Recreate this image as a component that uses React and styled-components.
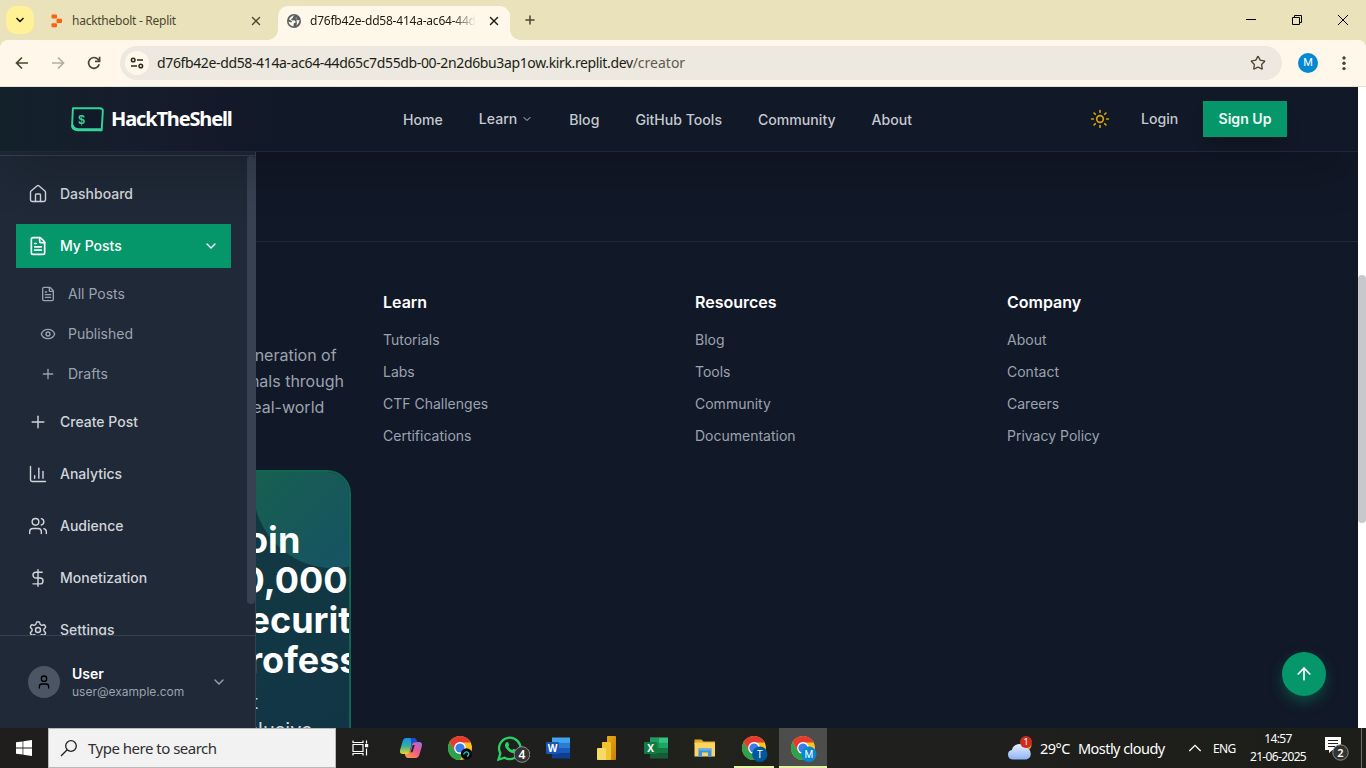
import React from 'react';
import styled, { createGlobalStyle, css } from 'styled-components';
import {
  House, FileText, Eye, Plus, ChartColumn, Users, DollarSign, Settings,
  ChevronDown, User, ArrowUp, Sun, X, Star,
} from 'lucide-react';

const ui = '"Noto Sans", "Open Sans", sans-serif';
const inter = 'Inter, "Liberation Sans", sans-serif';

const GlobalStyle = createGlobalStyle`
  * { box-sizing: border-box; }
  body { margin: 0; overflow: hidden; }
  svg { display: block; flex: none; }
`;

const Screen = styled.div`
  width: 1366px;
  height: 768px;
  display: flex;
  flex-direction: column;
  overflow: hidden;
  font-family: ${inter};
`;

/* ---------- browser frame ---------- */

const TabStrip = styled.div`
  height: 40px;
  flex: none;
  display: flex;
  align-items: center;
  background: #eae2bb;
  padding-left: 6px;
`;
const TabSearch = styled.div`
  width: 28px;
  height: 28px;
  border-radius: 10px;
  background: #fff196;
  display: grid;
  place-items: center;
  color: #201c00;
`;
const Tab = styled.div`
  display: flex;
  align-items: center;
  height: 34px;
  margin-top: 6px;
  font: 12px/16px ${ui};
  color: ${p => (p.$active ? '#1f1c0c' : '#4a4630')};
  padding: 0 9px 5px ${p => (p.$active ? 9 : 17)}px;
  width: ${p => p.$width}px;
  ${p => p.$active && css`
    background: #fff8ea;
    border-radius: 10px 10px 0 0;
    position: relative;
    &::before, &::after {
      content: '';
      position: absolute;
      bottom: 0;
      width: 10px;
      height: 10px;
    }
    &::before { left: -10px; background: radial-gradient(circle at 0 0, transparent 9.5px, #fff8ea 10px); }
    &::after { right: -10px; background: radial-gradient(circle at 100% 0, transparent 9.5px, #fff8ea 10px); }
  `}
`;
const TabTitle = styled.span`
  flex: 1;
  margin-left: 9px;
  letter-spacing: ${p => p.$track}px;
  white-space: nowrap;
  overflow: hidden;
  ${p => p.$fade && css`mask-image: linear-gradient(90deg, #000 86%, transparent 100%);`}
`;
const TabClose = styled(X).attrs({ size: 14, strokeWidth: 2.4 })`
  margin: 0 ${p => p.$after || 0}px 0 11px;
`;
const NewTab = styled.div`
  margin-left: 13px;
  color: #4a4630;
`;
const WindowControls = styled.div`
  margin-left: auto;
  display: flex;
  align-items: center;
  gap: 36px;
  padding-right: 18px;
`;

const ToolbarBack = styled.div`
  background: #eae2bb;
  flex: none;
`;
const Toolbar = styled.div`
  height: 47px;
  background: #fff8ea;
  border-radius: 8px 8px 0 0;
  border-bottom: 1px solid #e6e0d0;
  display: flex;
  align-items: center;
  padding: 0 20px 0 14px;
`;
const NavButton = styled.div`
  width: 16px;
  height: 16px;
  margin-right: 20px;
  color: ${p => (p.$dim ? '#b2ad9c' : '#4a4630')};
`;
const Omnibox = styled.div`
  flex: 1;
  margin: 0 16px 0 -2px;
  height: 34px;
  border-radius: 17px;
  background: #ede8e0;
  display: flex;
  align-items: center;
  padding: 0 16px 0 5px;
  font: 14px/20px ${ui};
  color: #201e14;
`;
const SiteInfo = styled.div`
  width: 24px;
  height: 24px;
  border-radius: 50%;
  background: #fff8ea;
  display: grid;
  place-items: center;
  margin-right: 8px;
`;
const Url = styled.span`
  flex: 1;
  white-space: nowrap;
  letter-spacing: -0.365px;
`;
const UrlPath = styled.span`
  color: #5f5b4e;
  letter-spacing: 0;
`;
const Profile = styled.div`
  width: 20px;
  height: 20px;
  border-radius: 50%;
  background: #0488d1;
  color: #fff;
  font: 11px/20px Roboto, sans-serif;
  text-align: center;
  margin-right: 24px;
`;

/* ---------- page ---------- */

const Viewport = styled.div`
  flex: 1;
  min-height: 0;
  display: flex;
  background: #fff;
`;
const Page = styled.div`
  width: 1358px;
  display: flex;
  flex-direction: column;
  overflow: hidden;
  background: #111827;
`;
const ScrollTrack = styled.div`
  width: 8px;
  padding-top: 188px;
`;
const ScrollThumb = styled.div`
  width: 8px;
  height: ${p => p.$height}px;
  border-radius: 4px;
  background: ${p => p.$color};
`;

const Header = styled.header`
  height: 65px;
  flex: none;
  display: flex;
  align-items: center;
  padding: 0 71px;
  border-bottom: 1px solid #1f2838;
  background: linear-gradient(90deg, #13212b 0, #141f2b 70px, #161d2c 120px, #141a29 200px, #111827 280px);
  box-shadow: 0 25px 50px -12px rgba(0, 0, 0, 0.25);
  z-index: 3;
`;
const Brand = styled.div`
  display: flex;
  align-items: center;
  gap: 7px;
  width: 332px;
  color: #fff;
  font: 700 20px/28px ${ui};
  letter-spacing: -1.15px;
`;
const Menu = styled.nav`
  display: flex;
  gap: 36px;
  flex: 1;
  padding-top: 2px;
`;
const MenuLink = styled.span`
  display: flex;
  align-items: center;
  gap: 4px;
  font-weight: 500;
  font-size: 14.1px;
  line-height: 20px;
  color: #c5c9d0;
  white-space: nowrap;
  ${p => p.$raised && css`
    padding-bottom: 2px;
    margin: -1px 0 0 0;
  `}
`;
const Login = styled.span`
  margin: 0 24px 0 31px;
  width: 38px;
  font-weight: 500;
  font-size: 14.1px;
  line-height: 20px;
  color: #c5c9d0;
`;
const SignUp = styled.div`
  height: 36px;
  width: 84px;
  background: #059669;
  color: #f1faf6;
  font-weight: 600;
  font-size: 14.1px;
  line-height: 36px;
  text-align: center;
  box-shadow: 0 10px 15px -3px rgba(0, 0, 0, 0.2);
`;

const Body = styled.div`
  flex: 1;
  min-height: 0;
  display: grid;
  grid-template: minmax(0, 1fr) / minmax(0, 1fr);
`;

/* The sidebar shares the grid cell with the page and covers its left part. */
const Sidebar = styled.aside`
  grid-area: 1 / 1;
  width: 256px;
  z-index: 2;
  display: flex;
  flex-direction: column;
  background: #1f2937;
  border-right: 1px solid #374151;
`;
const SidebarScroll = styled.div`
  flex: 1;
  min-height: 0;
  display: flex;
  overflow: hidden;
  margin-top: 3px;
  border-top: 1px solid #374151;
`;
const SidebarNav = styled.div`
  flex: 1;
  padding: 16px;
  display: flex;
  flex-direction: column;
  gap: 8px;
`;
const NavItem = styled.div`
  height: 44px;
  flex: none;
  display: flex;
  align-items: center;
  gap: 12px;
  padding: 0 12px;
  font-size: 14px;
  line-height: 20px;
  font-weight: 500;
  background: ${p => (p.$active ? '#059669' : 'transparent')};
  color: ${p => (p.$active ? '#fff' : '#d1d5db')};
`;
const NavLabel = styled.span`
  flex: 1;
`;
const SubNav = styled.div`
  display: flex;
  flex-direction: column;
  gap: 4px;
  padding-left: 12px;
`;
const SubItem = styled.div`
  height: 36px;
  display: flex;
  align-items: center;
  gap: 12px;
  padding: 0 12px;
  font-size: 14px;
  line-height: 20px;
  color: #9ca3af;
`;
const UserPanel = styled.div`
  height: 93px;
  flex: none;
  border-top: 1px solid #374151;
  display: flex;
  align-items: center;
  padding: 0 28px;
  color: #9ca3af;
`;
const Avatar = styled.div`
  width: 32px;
  height: 32px;
  border-radius: 50%;
  background: #4b5563;
  color: #000;
  display: grid;
  place-items: center;
  margin-right: 12px;
`;
const UserText = styled.div`
  flex: 1;
  font-size: 12px;
  line-height: 16px;
`;
const UserName = styled.div`
  color: #fff;
  font-size: 14px;
  font-weight: 600;
  line-height: 20px;
`;

const Main = styled.main`
  grid-area: 1 / 1;
  padding-top: 89px;
  overflow: hidden;
`;
const Footer = styled.footer`
  border-top: 1px solid #1f2937;
  padding: 48px 71px 0;
  display: grid;
  grid-template-columns: repeat(4, 280px);
  gap: 32px;
`;
const FooterColumn = styled.div`
  display: flex;
  flex-direction: column;
`;
const FooterTitle = styled.div`
  color: #fff;
  font-size: 16px;
  font-weight: 600;
  line-height: 24px;
  margin-bottom: 16px;
`;
const FooterLink = styled.div`
  color: #9ca3af;
  font-size: 14px;
  line-height: 20px;
  margin-bottom: 12px;
`;
const Mission = styled.p`
  margin: 52px 0 0;
  color: #9ca3af;
  font-size: 16px;
  line-height: 26px;
  white-space: nowrap;
`;
const JoinCard = styled.div`
  margin-top: 50px;
  width: 280px;
  height: 420px;
  border: 2px solid #0e6653;
  border-radius: 24px;
  background: linear-gradient(160deg, #113a40, #123348);
  overflow: hidden;
  position: relative;
  padding: 48px 0 0 152px;
`;
const Bubble = styled.div`
  position: absolute;
  top: -64px;
  right: -64px;
  width: 160px;
  height: 160px;
  border-radius: 50%;
  background: linear-gradient(135deg, #185f50 20%, #16565f 65%, #165268);
`;
const JoinTitle = styled.div`
  position: relative;
  color: #fff;
  font-weight: 700;
  font-size: 36px;
  line-height: 40px;
`;
const JoinText = styled.div`
  position: relative;
  width: 100px;
  margin-top: 8px;
  color: #d1d5db;
  font-size: 20px;
  line-height: 28px;
`;
const BackToTop = styled.div`
  grid-area: 1 / 1;
  place-self: end;
  margin: 0 32px 32px 0;
  width: 44px;
  height: 44px;
  border-radius: 50%;
  background: #059669;
  color: #fff;
  display: grid;
  place-items: center;
  box-shadow: 0 6px 14px rgba(5, 150, 105, 0.4);
  z-index: 1;
`;

/* ---------- taskbar ---------- */

const Taskbar = styled.div`
  height: 40px;
  flex: none;
  display: flex;
  background: linear-gradient(90deg, #1f1e1d 0, #1f1f1e 640px, #22231b 715px, #1f1f1d 840px, #1d1e1a 1366px);
  color: #fff;
  font-family: ${ui};
`;
const TaskCell = styled.div`
  width: 48px;
  height: 40px;
  margin-right: ${p => p.$gap ?? 1}px;
  padding-left: ${p => p.$shift || 0}px;
  display: grid;
  place-items: center;
  background: ${p => (p.$current ? '#4d4d4c' : 'transparent')};
  box-shadow: ${p => (p.$running ? 'inset 0 -2px #e2f5a4' : 'none')};
  ${p => p.$narrow && css`width: 40px; margin: 0 5px 0 4px;`}
`;
const SearchBox = styled.div`
  width: 288px;
  border: 1px solid #b9b9b9;
  background: #f2f2f2;
  color: #303030;
  display: flex;
  align-items: center;
  gap: 10px;
  padding-left: 11px;
  font-size: 15px;
  letter-spacing: -0.5px;
`;
const Tray = styled.div`
  margin-left: auto;
  display: flex;
  align-items: center;
`;
const TrayText = styled.span`
  font-size: ${p => p.$size}px;
  letter-spacing: ${p => p.$track}px;
  width: ${p => p.$width}px;
  margin-left: ${p => p.$before || 0}px;
  white-space: nowrap;
`;
const Clock = styled.div`
  width: 64px;
  text-align: center;
  font-size: 12px;
  line-height: 18px;
  letter-spacing: -0.65px;
  white-space: nowrap;
  margin: 0 15px 0 -3px;
`;
const ShowDesktop = styled.div`
  width: 5px;
  height: 40px;
  margin-left: 11px;
  border-left: 1px solid #6d6d6b;
`;

/* ---------- drawings ---------- */

const ReplitMark = () => (
  <svg width="12" height="14" viewBox="0 0 12 14" fill="#ff5f0f">
    <rect x="0.5" y="0.5" width="5.5" height="4" rx="1" />
    <rect x="5.5" y="4.7" width="5.5" height="4.3" rx="1" />
    <rect x="0.5" y="9.2" width="5.5" height="4" rx="1" />
  </svg>
);

const Globe = () => (
  <svg width="14" height="14" viewBox="0 0 14 14">
    <circle cx="7" cy="7" r="7" fill="#5a5d62" />
    <path d="M7.600 1.400Q5.400 2.300 5.700 4.200 3.600 4.600 4.600 6.300L7.800 6.600Q8.900 7.200 8.400 8.800L6.800 9.300 6.400 12.500Q2 11.600 1.500 7.600L4.200 8.600 5.200 7.300 2 5.400Q3.600 1.700 7.600 1.400ZM9.200 3.100 8.700 4.800 10.300 6.200 12.600 6Q12.300 9.600 9.400 11.800L9.900 9.200" fill="#fff8ea" />
  </svg>
);

const Arrow = ({ flip }) => (
  <svg width="16" height="16" viewBox="0 0 16 16" fill="none" stroke="currentColor" strokeWidth="1.7">
    <path d={flip ? 'M2 8h11M8 2.5 13.5 8 8 13.5' : 'M14 8H3M8 2.5 2.5 8 8 13.5'} />
  </svg>
);

const Reload = () => (
  <svg width="16" height="16" viewBox="0 0 16 16" fill="none" stroke="currentColor" strokeWidth="1.7">
    <path d="M13.2 9.2A5.4 5.4 0 1 1 12 4.3L13.4 6" />
    <path d="M13.6 1.8v4.6H9" />
  </svg>
);

const Tune = () => (
  <svg width="14" height="12" viewBox="0 0 14 12" fill="none" stroke="#2a281e" strokeWidth="1.5">
    <circle cx="3.2" cy="3" r="1.8" />
    <path d="M7 3h6M1 9h6" />
    <circle cx="10.8" cy="9" r="1.8" />
  </svg>
);

const ShellLogo = () => (
  <svg width="33" height="25" viewBox="0 0 33 25">
    <path d="M1.900 1.300h26.800q3.400 0 3.100 2.900L30.700 23.200H7.200Q.9 23.200 1.100 18.500Z" fill="#111a29" stroke="#34d399" strokeWidth="1.900" strokeLinejoin="round" />
    <path d="M1.500 18q.6 4.200 5.500 4.500h23.300" fill="none" stroke="#34d399" strokeWidth="2.600" />
    <text x="7" y="16.500" fontFamily="Liberation Mono, monospace" fontSize="12" fontWeight="700" fill="#34d399">$</text>
  </svg>
);

const Magnifier = () => (
  <svg width="18" height="18" viewBox="0 0 18 18" fill="none" stroke="#222" strokeWidth="1.300">
    <circle cx="11" cy="7" r="5.300" />
    <path d="M7.200 10.800 1 17" />
  </svg>
);

const TrayChevron = () => (
  <svg width="14" height="8" viewBox="0 0 14 8" fill="none" stroke="#fff" strokeWidth="1.300">
    <path d="M1.300 7 7 1.300 12.700 7" />
  </svg>
);

const Chrome = ({ children }) => (
  <svg width="28" height="28" viewBox="0 0 28 28">
    <circle cx="14" cy="14" r="12" fill="#fcc31e" />
    <path d="M14 14 8.8 17 3.6 8A12 12 0 0 0 14 26l5.2-9Z" fill="#2ba24c" />
    <path d="M14 8.500h10.700A12 12 0 0 0 3.600 8l5.200 9Z" fill="#e33b2e" />
    <circle cx="14" cy="14" r="5.900" fill="#fff" />
    <circle cx="14" cy="14" r="4.600" fill="#3b7ded" />
    {children}
  </svg>
);

const LetterBadge = ({ letter, fill }) => (
  <>
    <circle cx="19.800" cy="20.200" r="7.700" fill={fill} />
    <text x="19.800" y="23.800" textAnchor="middle" fontFamily="Roboto, sans-serif" fontSize="10" fill="#fff">{letter}</text>
  </>
);

const Copilot = () => (
  <svg width="24" height="24" viewBox="0 0 24 24">
    <defs>
      <linearGradient id="cpa" x1="0.300" y1="0" x2="0.300" y2="1">
        <stop offset="0" stopColor="#1a8ff0" /><stop offset=".5" stopColor="#30b09d" /><stop offset="1" stopColor="#f0d22a" />
      </linearGradient>
      <linearGradient id="cpb" x1="1" y1="0" x2="0.200" y2="1">
        <stop offset="0" stopColor="#9a6cf5" /><stop offset=".5" stopColor="#ee5a86" /><stop offset="1" stopColor="#fb9a45" />
      </linearGradient>
    </defs>
    <path d="M17.200 22H9q-2 0-2.700-2.200L5.500 17h3q2 0 2.600-2l2.200-7.400Q13.900 6 16 6h4q4 0 2.800 4.500L20.300 19q-.9 3-3.100 3Z" fill="url(#cpb)" />
    <path d="M6.800 2H15L12.300 9.500 10.700 15.400Q10.100 18 8 18H4Q0 18 1.200 13.500L3.700 5Q4.600 2 6.800 2Z" fill="url(#cpa)" />
    <path d="M11.500 2H15q2 0 2.700 2.200L18.300 6.200H16q-2.200 0-2.700 1.600L12.600 10Z" fill="#1c50c8" />
    <path d="M13.700 9 11.600 16.200h2L15.700 9Z" fill="#20243a" />
  </svg>
);

const WhatsApp = () => (
  <svg width="34" height="30" viewBox="0 0 34 30">
    <path d="M2.500 26.500 4.300 20.300A10.700 10.700 0 1 1 8.600 24.700Z" fill="none" stroke="#27d163" strokeWidth="2.300" />
    <path d="M9.500 10.500q1.300-2.200 2.600-1l1.200 2.600-1 1.500q1.200 2.400 3.800 3.500l1.500-1.400 2.700 1.400q.4 2-1.900 2.900-2.200.7-5.400-1.600-3.900-3-4.100-6.300Z" fill="#27d163" />
    <circle cx="26" cy="21.500" r="7.800" fill="#333" stroke="#8d8d8d" />
    <text x="26" y="26" textAnchor="middle" fontFamily="Noto Sans, sans-serif" fontSize="12" fontWeight="600" fill="#fff">4</text>
  </svg>
);

const OfficeIcon = ({ letter, colors, tile }) => (
  <svg width="24" height="24" viewBox="0 0 24 24">
    <rect x="6" y="1.500" width="18" height="5.500" fill={colors[0]} />
    <rect x="6" y="6.800" width="18" height="5.400" fill={colors[1]} />
    <rect x="6" y="12" width="18" height="5.400" fill={colors[2]} />
    <rect x="6" y="17.200" width="18" height="5.300" fill={colors[3]} />
    {letter === 'X' && <path d="M6 1.500h9v16H6z" fill="#107c41" opacity=".55" />}
    <rect x="0" y="6" width="13" height="12" rx="1" fill={tile} />
    <text x="6.500" y="15.600" textAnchor="middle" fontFamily="Open Sans, sans-serif" fontSize="10" fontWeight="700" fill="#fff">{letter}</text>
  </svg>
);

const PowerBi = () => (
  <svg width="24" height="24" viewBox="0 0 24 24">
    <defs>
      <linearGradient id="pb" x1="0" y1="0" x2="1" y2="1">
        <stop offset="0" stopColor="#e8ad10" /><stop offset="1" stopColor="#c87e12" />
      </linearGradient>
    </defs>
    <rect x="12" y="0" width="9" height="24" rx=".8" fill="url(#pb)" />
    <rect x="7" y="6" width="9" height="18" rx=".8" fill="#f0c22c" />
    <rect x="2" y="12" width="9" height="12" rx=".8" fill="#f7da66" />
  </svg>
);

const Explorer = () => (
  <svg width="24" height="24" viewBox="0 0 24 24">
    <path d="M1.500 3.500h7l2 2h11.500v3H1.500z" fill="#e5a823" />
    <path d="M1.500 6.500h20.500v14H1.500z" fill="#fcd462" />
    <path d="M5.500 21v-8.500h13V21h-3.500v-4.500H9V21z" fill="#3f93d8" />
    <path d="M5.500 12.500h13v2h-13z" fill="#62b3ec" />
  </svg>
);

const TaskView = () => (
  <svg width="18" height="18" viewBox="0 0 18 18" fill="none" stroke="#fff" strokeWidth="1.200">
    <path d="M2 5.500h10v7H2zM2 1.500v2h10v-2M2 16.500v-2h10v2" />
    <path d="M15.500 1.500v3M15.500 9.500v7" />
    <rect x="14.600" y="5.600" width="2" height="2" fill="#fff" />
  </svg>
);

const WindowsLogo = () => (
  <svg width="16" height="16" viewBox="0 0 16 16" fill="#fff">
    <path d="M0 2.300 6.600 1.400V7.600H0zM7.300 1.300 16 0v7.600H7.300zM0 8.400h6.600v6.200L0 13.700zM7.300 8.400H16V16l-8.700-1.300z" />
  </svg>
);

const Weather = () => (
  <svg width="27" height="26" viewBox="0 0 27 26">
    <defs>
      <linearGradient id="cl" x1="0" y1="0" x2="0" y2="1">
        <stop offset="0" stopColor="#e6efff" /><stop offset="1" stopColor="#8db4f5" />
      </linearGradient>
    </defs>
    <circle cx="19" cy="10" r="5.500" fill="#f39a1d" />
    <path d="M5.500 24.500a4.800 4.800 0 0 1-.6-9.500 7.200 7.200 0 0 1 13.400-2.200A6 6 0 0 1 19.500 24.500Z" fill="url(#cl)" />
    <circle cx="19" cy="7" r="6" fill="#cf2b20" />
    <text x="19" y="10.300" textAnchor="middle" fontFamily="Noto Sans, sans-serif" fontSize="9" fill="#fff">1</text>
  </svg>
);

const Notifications = () => (
  <svg width="25" height="26" viewBox="0 0 25 26">
    <path d="M0 2h16v13H7.500L4 18v-3H0z" fill="#fff" />
    <path d="M3 5.500h10M3 8.500h10M3 11.500h7" stroke="#22221e" strokeWidth="1" />
    <circle cx="15.500" cy="17.500" r="7.700" fill="#333331" stroke="#8d8d8b" />
    <text x="15.500" y="21.500" textAnchor="middle" fontFamily="Noto Sans, sans-serif" fontSize="11" fontWeight="600" fill="#fff">2</text>
  </svg>
);

/* ---------- data ---------- */

const columns = [
  ['Learn', ['Tutorials', 'Labs', 'CTF Challenges', 'Certifications']],
  ['Resources', ['Blog', 'Tools', 'Community', 'Documentation']],
  ['Company', ['About', 'Contact', 'Careers', 'Privacy Policy']],
];
const subItems = [[FileText, 'All Posts'], [Eye, 'Published'], [Plus, 'Drafts']];
const lowerItems = [
  [Plus, 'Create Post'], [ChartColumn, 'Analytics'], [Users, 'Audience'],
  [DollarSign, 'Monetization'], [Settings, 'Settings'],
];

export default function App() {
  return (
    <Screen>
      <GlobalStyle />
      <TabStrip>
        <TabSearch><ChevronDown size={12} strokeWidth={3.4} /></TabSearch>
        <Tab $width={244}>
          <ReplitMark />
          <TabTitle $track={-0.26}>hackthebolt - Replit</TabTitle>
          <TabClose $after={6} />
        </Tab>
        <Tab $active $width={232}>
          <Globe />
          <TabTitle $track={-0.22} $fade>d76fb42e-dd58-414a-ac64-44d65c7d</TabTitle>
          <TabClose />
        </Tab>
        <NewTab><Plus size={14} strokeWidth={2.6} /></NewTab>
        <WindowControls>
          <svg width="10" height="10" stroke="#000" fill="none"><path d="M0 4.500h10" /></svg>
          <svg width="10" height="10" stroke="#000" fill="none"><path d="M.5 2.500h7v7h-7zM2.500 2.500v-2h7v7h-2" /></svg>
          <svg width="10" height="10" stroke="#000" fill="none"><path d="M0 0l10 10M10 0 0 10" /></svg>
        </WindowControls>
      </TabStrip>
      <ToolbarBack>
        <Toolbar>
          <NavButton><Arrow /></NavButton>
          <NavButton $dim><Arrow flip /></NavButton>
          <NavButton><Reload /></NavButton>
          <Omnibox>
            <SiteInfo><Tune /></SiteInfo>
            <Url>d76fb42e-dd58-414a-ac64-44d65c7d55db-00-2n2d6bu3ap1ow.kirk.replit.dev<UrlPath>/creator</UrlPath></Url>
            <Star size={16} strokeWidth={2} color="#4a4630" strokeLinejoin="miter" />
          </Omnibox>
          <Profile>M</Profile>
          <svg width="4" height="16" viewBox="0 0 4 16" fill="#4a4630">
            <circle cx="2" cy="3" r="1.700" /><circle cx="2" cy="8.300" r="1.700" /><circle cx="2" cy="13.600" r="1.700" />
          </svg>
        </Toolbar>
      </ToolbarBack>

      <Viewport>
        <Page>
          <Header>
            <Brand><ShellLogo />HackTheShell</Brand>
            <Menu>
              <MenuLink>Home</MenuLink>
              <MenuLink $raised>Learn<ChevronDown size={12} /></MenuLink>
              <MenuLink>Blog</MenuLink>
              <MenuLink>GitHub Tools</MenuLink>
              <MenuLink>Community</MenuLink>
              <MenuLink>About</MenuLink>
            </Menu>
            <Sun size={20} color="#d9a406" />
            <Login>Login</Login>
            <SignUp>Sign Up</SignUp>
          </Header>
          <Body>
            <Sidebar>
              <SidebarScroll>
                <SidebarNav>
                  <NavItem><House size={20} strokeWidth={1.700} /><NavLabel>Dashboard</NavLabel></NavItem>
                  <NavItem $active>
                    <FileText size={20} /><NavLabel>My Posts</NavLabel><ChevronDown size={16} />
                  </NavItem>
                  <SubNav>
                    {subItems.map(([Icon, label]) => (
                      <SubItem key={label}><Icon size={16} />{label}</SubItem>
                    ))}
                  </SubNav>
                  {lowerItems.map(([Icon, label]) => (
                    <NavItem key={label}><Icon size={20} strokeWidth={1.700} /><NavLabel>{label}</NavLabel></NavItem>
                  ))}
                </SidebarNav>
                <ScrollThumb $height={448} $color="#374151" />
              </SidebarScroll>
              <UserPanel>
                <Avatar><User size={16} /></Avatar>
                <UserText><UserName>User</UserName>user@example.com</UserText>
                <ChevronDown size={16} />
              </UserPanel>
            </Sidebar>
            <Main>
              <Footer>
                <FooterColumn>
                  <Mission>
                    Empowering the next generation of<br />
                    cybersecurity professionals through<br />
                    hands-on learning and real-world
                  </Mission>
                  <JoinCard>
                    <Bubble />
                    <JoinTitle>Join 10,000+ Security Professionals</JoinTitle>
                    <JoinText>Get exclusive</JoinText>
                  </JoinCard>
                </FooterColumn>
                {columns.map(([title, links]) => (
                  <FooterColumn key={title}>
                    <FooterTitle>{title}</FooterTitle>
                    {links.map(link => <FooterLink key={link}>{link}</FooterLink>)}
                  </FooterColumn>
                ))}
              </Footer>
            </Main>
            <BackToTop><ArrowUp size={20} /></BackToTop>
          </Body>
        </Page>
        <ScrollTrack><ScrollThumb $height={248} $color="#c6c8cc" /></ScrollTrack>
      </Viewport>

      <Taskbar>
        <TaskCell $gap={0}><WindowsLogo /></TaskCell>
        <SearchBox>
          <Magnifier />
          Type here to search
        </SearchBox>
        <TaskCell $gap={3}><TaskView /></TaskCell>
        <TaskCell><Copilot /></TaskCell>
        <TaskCell>
          <Chrome>
            <circle cx="20.500" cy="20" r="5.700" fill="#050808" />
            <path d="M17.500 20.500q2.500-4.500 5-1.500 1 2-1.500 3.500" fill="none" stroke="#20c4c4" strokeWidth="1.300" />
          </Chrome>
        </TaskCell>
        <TaskCell $shift={7}><WhatsApp /></TaskCell>
        <TaskCell><OfficeIcon letter="W" tile="#1a56b8" colors={['#41a5ee', '#2b7cd3', '#185abd', '#103f91']} /></TaskCell>
        <TaskCell><PowerBi /></TaskCell>
        <TaskCell><OfficeIcon letter="X" tile="#107c41" colors={['#33c481', '#21a366', '#107c41', '#185c37']} /></TaskCell>
        <TaskCell><Explorer /></TaskCell>
        <TaskCell $running $narrow><Chrome><LetterBadge letter="T" fill="#01579b" /></Chrome></TaskCell>
        <TaskCell $running $current><Chrome><LetterBadge letter="M" fill="#0488d1" /></Chrome></TaskCell>
        <Tray>
          <Weather />
          <TrayText $size={14.500} $track={-0.5} $width={38} $before={6}>29°C</TrayText>
          <TrayText $size={14.500} $track={-0.55} $width={110}>Mostly cloudy</TrayText>
          <TrayChevron />
          <TrayText $size={12} $track={-0.6} $width={36} $before={11}>ENG</TrayText>
          <Clock>14:57<br />21-06-2025</Clock>
          <Notifications />
          <ShowDesktop />
        </Tray>
      </Taskbar>
    </Screen>
  );
}
